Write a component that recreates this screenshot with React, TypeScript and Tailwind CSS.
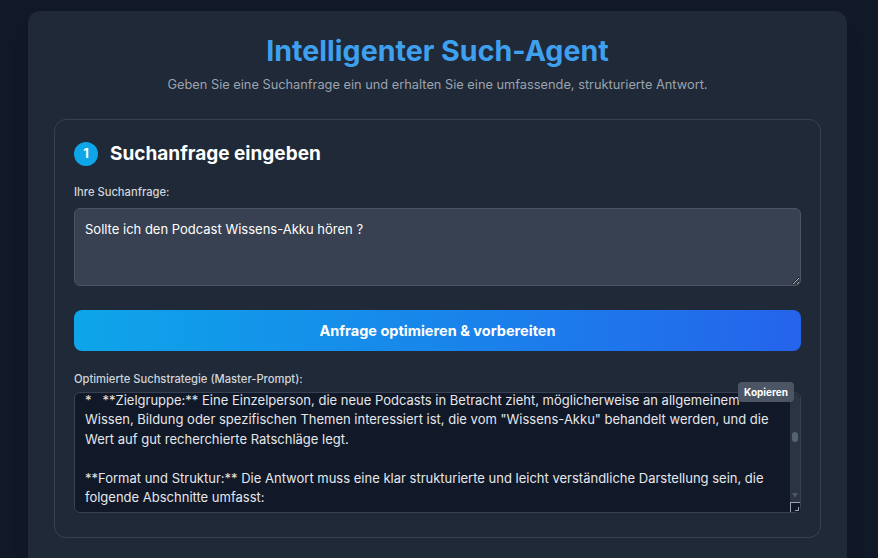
import { useEffect, useRef } from 'react'

const PRELUDE = [
  '**Rolle:** Du bist ein erfahrener Medienberater und Podcast-Kritiker.',
  '',
  '**Aufgabe:** Beantworte die Frage, ob sich das Hören lohnt.',
  '',
  '**Kontext:**',
]

const BODY = `*   **Zielgruppe:** Eine Einzelperson, die neue Podcasts in Betracht zieht, möglicherweise an allgemeinem Wissen, Bildung oder spezifischen Themen interessiert ist, die vom "Wissens-Akku" behandelt werden, und die Wert auf gut recherchierte Ratschläge legt.

**Format und Struktur:** Die Antwort muss eine klar strukturierte und leicht verständliche Darstellung sein, die folgende Abschnitte umfasst:

1.  **Kurzüberblick:** Worum geht es im Podcast "Wissens-Akku"?
2.  **Inhalte und Themen:** Welche Themen werden behandelt?
3.  **Stärken:** Was zeichnet den Podcast aus?
4.  **Schwächen:** Welche Kritikpunkte gibt es?
5.  **Zielgruppe:** Für wen eignet sich der Podcast?
6.  **Fazit:** Eine klare Empfehlung mit Begründung.

**Quellen:** Nutze Bewertungen, Episodenbeschreibungen und Rezensionen.

**Tonfall:** Sachlich, freundlich und hilfreich.`

export default function App() {
  const promptRef = useRef<HTMLTextAreaElement>(null)

  useEffect(() => {
    // scroll the master prompt so the Zielgruppe line sits on top
    if (promptRef.current) promptRef.current.scrollTop = 12 + PRELUDE.length * 19.5
  }, [])

  return (
    <div className="min-h-screen bg-[#111827] pt-[11px] pr-[31px] pl-[28px] font-['Inter',sans-serif]">
      <div className="rounded-xl bg-[#1f2937] px-[26px] pt-[22px] pb-8 shadow-xl">
        <h1 className="text-center text-[28.6px] leading-9 font-bold text-[#3fa0ef]">
          Intelligenter Such-Agent
        </h1>
        <p className="mt-1.5 mb-6 text-center text-[12.8px] leading-5 text-[#9ca3af]">
          Geben Sie eine Suchanfrage ein und erhalten Sie eine umfassende, strukturierte Antwort.
        </p>

        <section className="rounded-xl border border-[#374151] px-[19px] pt-5 pb-6">
          <div className="mb-4 flex items-center gap-3">
            <span className="flex h-6 w-6 items-center justify-center rounded-full bg-[#0ea5e9] text-[13px] font-bold text-white">
              1
            </span>
            <h2 className="text-[19px] leading-7 font-bold text-white">Suchanfrage eingeben</h2>
          </div>

          <label className="mb-2 block text-[11.2px] leading-4 font-medium text-[#d1d5db]">
            Ihre Suchanfrage:
          </label>
          <textarea
            defaultValue="Sollte ich den Podcast Wissens-Akku hören ?"
            className="block h-[78px] w-full rounded-md border border-[#4b5563] bg-[#374151] p-2.5 text-[13px] leading-5 text-white outline-none [color-scheme:dark]"
          />

          <button className="mt-6 flex h-[41px] w-full items-center justify-center rounded-lg bg-linear-to-r from-[#0ea5e9] to-[#2563eb] text-[14.5px] font-bold text-white">
            Anfrage optimieren &amp; vorbereiten
          </button>

          <label className="mt-5 mb-[5px] block text-[11.2px] leading-4 font-medium text-[#d1d5db]">
            Optimierte Suchstrategie (Master-Prompt):
          </label>
          <div className="relative">
            <textarea
              ref={promptRef}
              readOnly
              defaultValue={PRELUDE.join('\n') + '\n' + BODY}
              className="block h-[121px] w-full resize-none overflow-hidden rounded-md border border-[#374151] bg-[#111827] py-2.5 pr-[26px] pl-2.5 text-[13px] leading-[19.5px] text-[#e5e7eb] outline-none"
            />
            {/* scrollbar */}
            <div className="absolute top-px right-px bottom-px w-[10px] rounded-tr-md bg-[#2b3441]">
              <div className="absolute top-[39px] left-[2px] h-[10px] w-[6px] rounded-full bg-[#556070]" />
              <div className="absolute bottom-[14px] left-[2px] h-0 w-0 border-x-[3px] border-t-[5px] border-x-transparent border-t-[#4b5563]" />
              <div className="absolute right-0 bottom-0 h-[10px] w-[10px] border-t border-l border-[#9ca3af] bg-[#111827]">
                <div className="absolute right-[1px] bottom-[1px] h-[4px] w-[4px] border-r border-b border-[#9ca3af]" />
              </div>
            </div>
            <button className="absolute top-[-10px] right-[7px] rounded bg-[#4b5563] px-1.5 py-0.5 text-[10px] leading-4 font-bold text-white">
              Kopieren
            </button>
          </div>
        </section>
      </div>
    </div>
  )
}
